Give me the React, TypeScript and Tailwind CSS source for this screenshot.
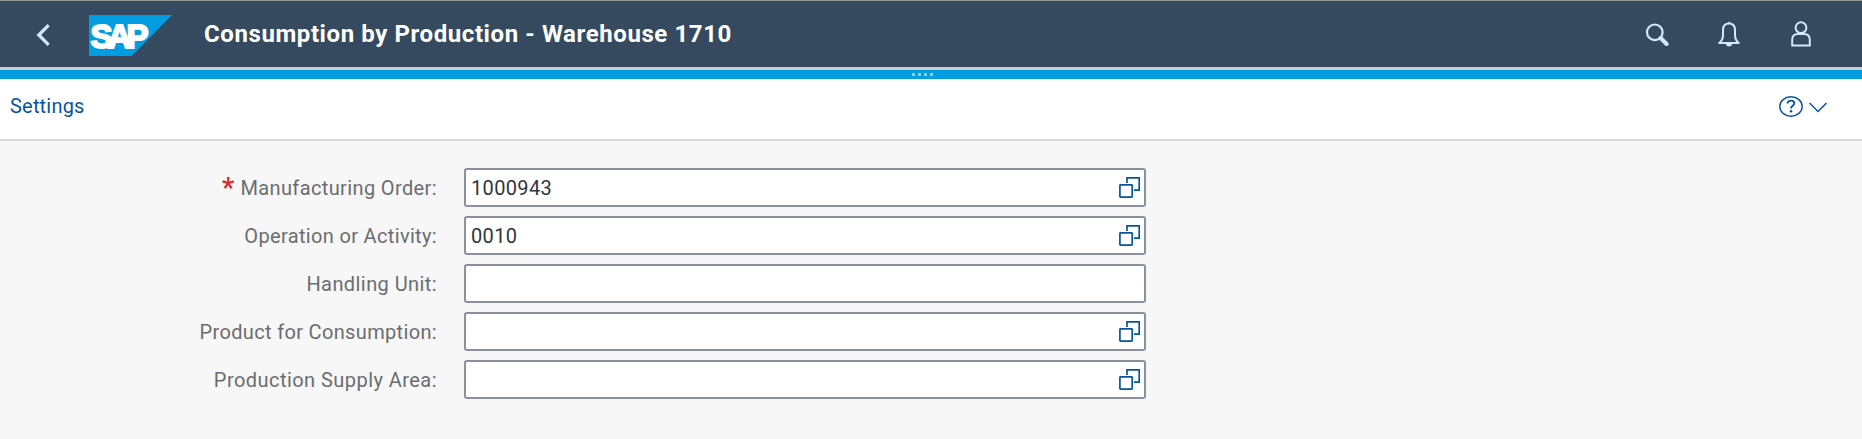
import type { ReactNode } from 'react'

interface Field {
  label: string
  value: string
  required?: boolean
  valueHelp: boolean
  tracking: string
}

const fields: Field[] = [
  { label: 'Manufacturing Order:', value: '1000943', required: true, valueHelp: true, tracking: 'tracking-[0.38px]' },
  { label: 'Operation or Activity:', value: '0010', valueHelp: true, tracking: 'tracking-[0.34px]' },
  { label: 'Handling Unit:', value: '', valueHelp: false, tracking: 'tracking-[0.42px]' },
  { label: 'Product for Consumption:', value: '', valueHelp: true, tracking: 'tracking-[0.34px]' },
  { label: 'Production Supply Area:', value: '', valueHelp: true, tracking: 'tracking-[0.45px]' },
]

function SapLogo() {
  return (
    <svg className="w-[83px] h-[41px]" viewBox="0 0 83 41">
      <path d="M0 0h83L42.5 41H0z" fill="#009de0" />
      <text
        x="1.5"
        y="32.7"
        fill="#fff"
        stroke="#fff"
        strokeWidth="2"
        fontFamily="'Liberation Sans', sans-serif"
        fontWeight="700"
        fontSize="33"
        textLength="58"
        lengthAdjust="spacing"
      >
        SAP
      </text>
    </svg>
  )
}

function ValueHelpIcon() {
  return (
    <svg className="w-[21px] h-[21px]" viewBox="0 0 21 21" fill="none" stroke="#0854a0" strokeWidth="1.7">
      <rect x="0.9" y="7.8" width="12.3" height="12.3" rx="0.6" />
      <path d="M8 6V0.9h12.2v12.2H15" />
    </svg>
  )
}

function ShellButton({ label, children }: { label: string; children: ReactNode }) {
  return (
    <button aria-label={label} className="w-[72px] h-[66px] flex items-center justify-center text-[#d1e8ff]">
      {children}
    </button>
  )
}

function ShellBar() {
  return (
    <header className="h-[67px] border-t border-[#999b98] bg-[#354a5f] flex items-center">
      <button aria-label="Back" className="ml-[36px] mt-[1px] text-[#d1e8ff]">
        <svg className="w-[14px] h-[22px]" viewBox="0 0 14 22" fill="none" stroke="currentColor" strokeWidth="3.2">
          <path d="M12.6 1.2L2.8 11l9.8 9.8" />
        </svg>
      </button>
      <div className="ml-[39px] mt-[3px]">
        <SapLogo />
      </div>
      <h1 className="ml-[32px] text-[24px] leading-[30px] tracking-[0.59px] font-bold text-white whitespace-nowrap">
        Consumption by Production - Warehouse 1710
      </h1>
      <div className="ml-auto mr-[25px] flex">
        <ShellButton label="Search">
          <svg className="w-[24px] h-[26px]" viewBox="0 0 24 26" fill="none" stroke="currentColor">
            <circle cx="9.8" cy="11.3" r="7.8" strokeWidth="2.2" />
            <path d="M15.6 17l6 6" strokeWidth="4" strokeLinecap="round" />
          </svg>
        </ShellButton>
        <ShellButton label="Notifications">
          <svg className="w-[22px] h-[26px]" viewBox="0 0 22 26" fill="none" stroke="currentColor" strokeWidth="2">
            <path d="M1.2 22c2.800-2 3.800-4.800 3.800-8.200V9.200C5 5 7.400 2.600 11 2.600s6 2.400 6 6.600v4.600c0 3.400 1 6.200 3.800 8.200z" strokeLinejoin="round" />
            <path d="M9.200 2.600L11 0.600l1.800 2zM7.600 22.600h6.800c-.5 2-1.600 3-3.400 3s-2.900-1-3.400-3z" fill="currentColor" stroke="none" />
          </svg>
        </ShellButton>
        <ShellButton label="User">
          <svg className="w-[20px] h-[26px]" viewBox="0 0 20 26" fill="none" stroke="currentColor" strokeWidth="2">
            <circle cx="10" cy="6.700" r="5.400" />
            <path d="M1.200 24.500v-5.500c0-3.800 2.400-6 5.800-6h6c3.400 0 5.800 2.200 5.800 6v5.500z" />
          </svg>
        </ShellButton>
      </div>
    </header>
  )
}

function FormField({ field }: { field: Field }) {
  return (
    <div className="flex items-center h-[39px]">
      <label className="w-[437px] flex justify-end text-[20px] leading-[24px] text-[#6a6d70] whitespace-nowrap">
        {field.required && <span className="mr-[6px] text-[27px] font-bold text-[#d32f2f]">*</span>}
        <span className={field.tracking}>{field.label}</span>
      </label>
      <div className="ml-[27px] w-[682px] h-[39px] rounded-[3px] border-2 border-[#89919a] bg-white flex items-center pl-[5px] pr-[4px]">
        <span className="flex-1 text-[20px] leading-[24px] tracking-[0.35px] text-[#32363a]">{field.value}</span>
        {field.valueHelp && <ValueHelpIcon />}
      </div>
    </div>
  )
}

export default function App() {
  return (
    <div className="w-[1862px] h-[439px] overflow-hidden bg-[#f7f7f7] font-['Roboto',sans-serif]">
      <ShellBar />
      <div className="h-[3px] bg-[#cccccc]" />
      <div className="h-[9px] bg-[#009de0] flex items-center justify-center gap-[3px] pr-[17px]">
        <span className="size-[3px] bg-[#85cef0]" />
        <span className="size-[3px] bg-[#85cef0]" />
        <span className="size-[3px] bg-[#85cef0]" />
        <span className="size-[3px] bg-[#85cef0]" />
      </div>

      <div className="h-[62px] bg-white border-b-2 border-[#d9d9d9] flex justify-between pl-[10px] pr-[35px]">
        <button className="h-[54px] text-[20px] leading-[24px] tracking-[0.2px] text-[#0854a0]">Settings</button>
        <button aria-label="Help" className="mt-[17px] h-[21px] flex text-[#0854a0]">
          <svg className="w-[24px] h-[21px]" viewBox="0 0 24 21" fill="none" stroke="currentColor">
            <ellipse cx="12" cy="10.500" rx="11.200" ry="9.700" strokeWidth="1.400" />
            <path d="M8.500 7.500c.2-1.900 1.400-2.900 3.400-2.900 2.100 0 3.400 1 3.400 2.700 0 2.500-3.300 2.400-3.300 5.100" strokeWidth="1.800" />
            <circle cx="12" cy="15.200" r="1.300" fill="currentColor" stroke="none" />
          </svg>
          <svg className="ml-[6px] mt-[6px] w-[18px] h-[11px]" viewBox="0 0 18 11" fill="none" stroke="currentColor" strokeWidth="1.500">
            <path d="M0.500 1L9 9.500 17.500 1" />
          </svg>
        </button>
      </div>

      <main className="pt-[27px] flex flex-col gap-[9px]">
        {fields.map((field) => (
          <FormField key={field.label} field={field} />
        ))}
      </main>
    </div>
  )
}
